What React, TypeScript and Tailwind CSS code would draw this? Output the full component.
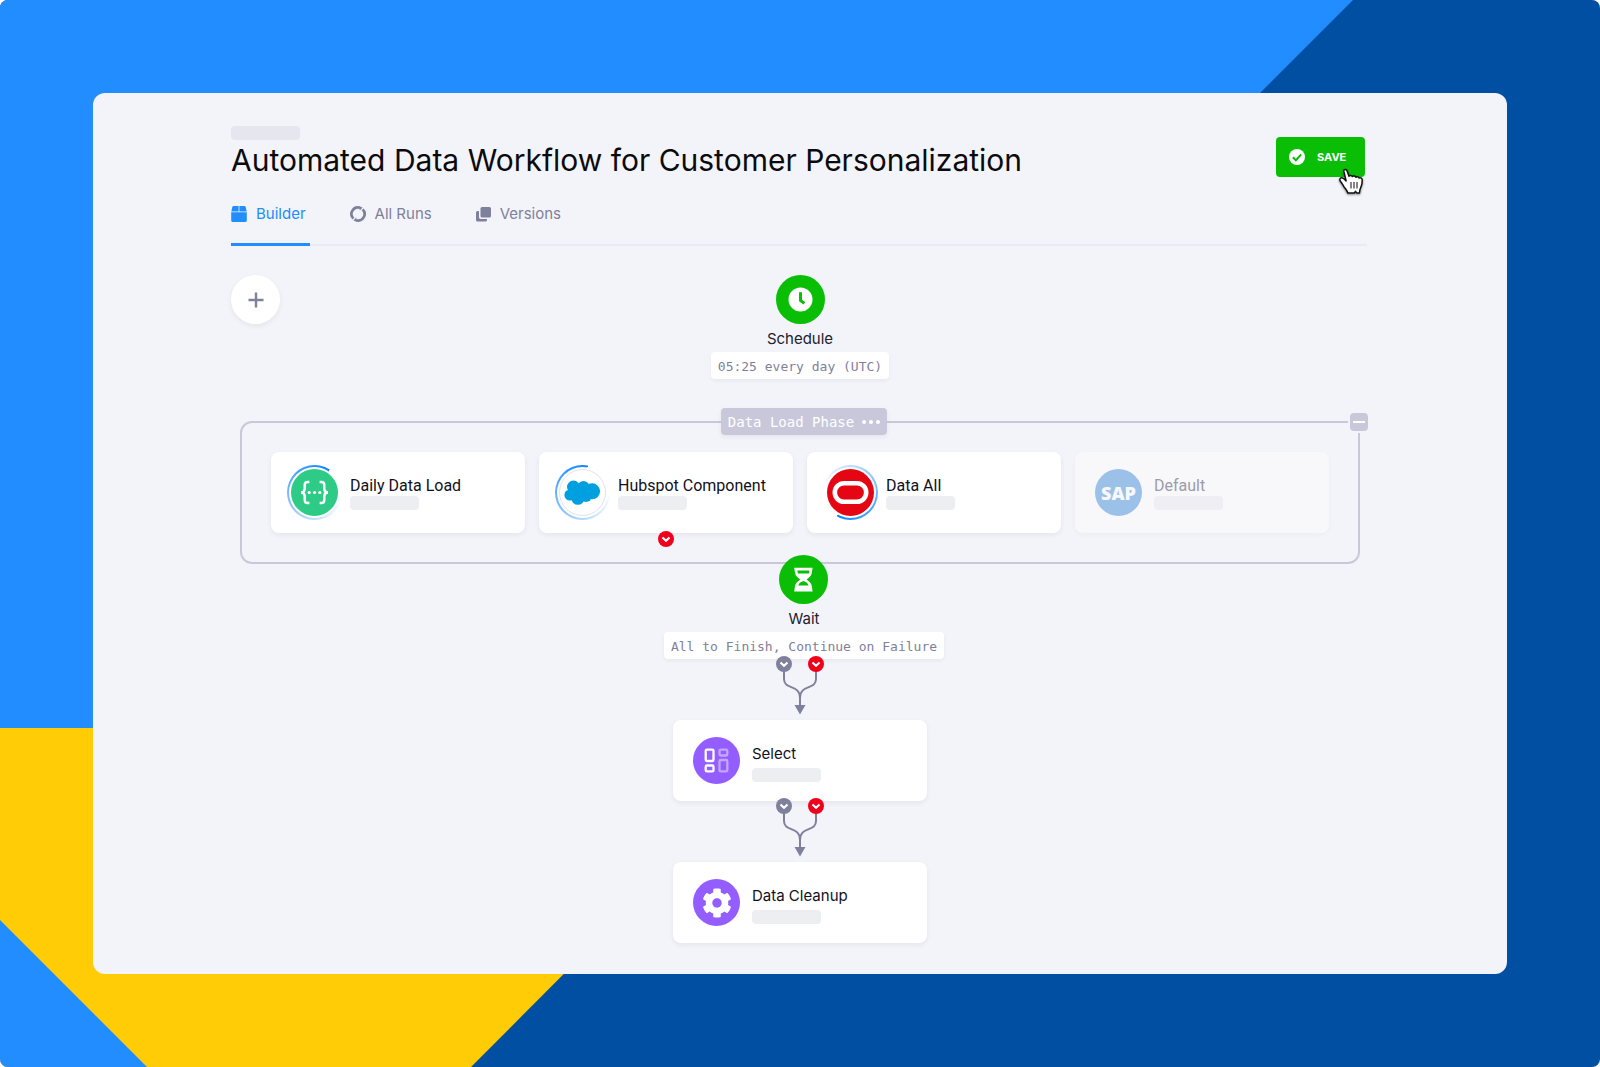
import type { ReactNode } from 'react';
import { FaCog } from 'react-icons/fa';

const tabs = [
  { label: 'Builder', icon: <BuilderIcon />, active: true },
  { label: 'All Runs', icon: <RunsIcon />, active: false },
  { label: 'Versions', icon: <VersionsIcon />, active: false },
];

function BuilderIcon() {
  return (
    <svg viewBox="0 0 16 16" className="size-4" fill="currentColor" aria-hidden="true">
      <path d="M2.700 0H7.600V5.400H.3L1.300 1.100A1.500 1.500 0 0 1 2.700 0z" />
      <path d="M8.400 0H13.300A1.500 1.500 0 0 1 14.700 1.100L15.700 5.400H8.400z" />
      <path d="M.2 6.200H15.800V14.500A1.500 1.500 0 0 1 14.300 16H1.700A1.500 1.500 0 0 1 .2 14.500z" />
    </svg>
  );
}

function RunsIcon() {
  return (
    <svg viewBox="0 0 16 16" className="size-4" fill="none" stroke="currentColor" strokeWidth="2.700" aria-hidden="true">
      <path d="M3.400 12.600A6.500 6.500 0 0 1 10 1.800" />
      <path d="M12.600 3.400A6.500 6.500 0 0 1 6 14.200" />
      <path d="M9 .2L12.600 1.500L9.800 4.600z" fill="currentColor" stroke="none" />
      <path d="M7 15.800L3.400 14.500L6.200 11.400z" fill="currentColor" stroke="none" />
    </svg>
  );
}

function VersionsIcon() {
  return (
    <svg viewBox="0 0 15 15" className="size-[15px]" fill="currentColor" aria-hidden="true">
      <rect x="4.500" y="0" width="10.500" height="10.500" rx="1.600" />
      <path d="M1.600 4H3V10.200A1.800 1.800 0 0 0 4.800 12H11V13A1.600 1.600 0 0 1 9.400 14.600H1.600A1.600 1.600 0 0 1 0 13V5.600A1.600 1.600 0 0 1 1.600 4z" />
    </svg>
  );
}

function Backdrop() {
  return (
    <svg
      viewBox="0 0 1600 1067"
      preserveAspectRatio="none"
      className="absolute inset-0 size-full"
      aria-hidden="true"
    >
      <rect width="1600" height="1067" fill="#004fa3" />
      <path d="M0 0H1353L625 728H0z" fill="#218dff" />
      <path d="M0 728H809L471 1067H0z" fill="#ffcc05" />
      <path d="M0 920L147 1067H0z" fill="#218dff" />
    </svg>
  );
}

function PointerHand() {
  return (
    <svg
      viewBox="0 0 27 30"
      className="pointer-events-none absolute left-[62px] top-[31px] h-[30px] w-[27px] drop-shadow-[0_1px_1px_rgba(0,0,0,0.45)]"
      aria-hidden="true"
    >
      <path
        d="M5.800 3.200C5.400 1.200 8.400 .7 9 2.700L11 8.300C11.500 7 13.900 7.200 14.300 8.600C15 7.500 17.400 7.800 17.900 9.300C18.700 8.400 20.700 8.800 21.100 10C21.900 9.300 24.100 9.800 24.200 11.800C24.300 15 24 16.700 23 18.900C22.200 20.700 21.500 22 21.500 25H18.800L17.500 23.400L16.300 25H9.800C9.300 22.500 7.200 20.700 5.700 18.300C4.700 16.700 4 15.200 2.600 13.500C1.200 11.800 1.800 9.500 3.900 9.700C5.500 9.900 6.600 11.200 8.100 13z"
        fill="#fff"
        stroke="#111"
        strokeWidth="1.500"
        strokeLinejoin="round"
      />
      <path d="M13 14V20.600M16 14V20.600M19 14V20.600" stroke="#222" strokeWidth="1.100" />
    </svg>
  );
}

function ClockIcon() {
  return (
    <svg viewBox="0 0 49 49" className="size-full" fill="none" aria-hidden="true">
      <circle cx="24.500" cy="24.500" r="12" fill="#fff" />
      <path d="M24.500 17.200V25.400L28.400 28.400" stroke="#0abe06" strokeWidth="3" />
    </svg>
  );
}

function HourglassIcon() {
  return (
    <svg viewBox="0 0 49 49" className="size-full" fill="none" aria-hidden="true">
      <path
        d="M15.200 12.800H33.600L32.700 18.600C32.300 21.300 29.300 23 27.600 24.600C29.300 26.200 32.300 27.900 32.700 30.600L33.600 36.500H15.200L16.100 30.600C16.500 27.900 19.500 26.200 21.200 24.600C19.500 23 16.500 21.300 16.100 18.600z"
        fill="#fff"
      />
      <path d="M18.300 15.600H30.500L29.800 18.500H19z" fill="#0abe06" />
      <path d="M19.300 30.500C19.800 27.700 22.200 26.800 24.400 25.900C26.600 26.800 29 27.700 29.500 30.500z" fill="#0abe06" />
    </svg>
  );
}

function ApiLogo() {
  return (
    <svg viewBox="0 0 47 47" className="relative size-full" fill="none" aria-hidden="true">
      <circle cx="23.500" cy="23.500" r="23.500" fill="#2dcb85" />
      <g stroke="#fff" strokeWidth="2.400">
        <path d="M18.400 13H16.600C14.600 13 13.700 14.200 13.700 16V19.800C13.700 22.200 12.600 23.400 10 23.500C12.600 23.600 13.700 24.800 13.700 27.200V31C13.700 32.800 14.600 34 16.600 34H18.400" />
        <path d="M28.600 13H30.400C32.400 13 33.300 14.200 33.300 16V19.800C33.300 22.200 34.400 23.400 37 23.500C34.400 23.600 33.300 24.800 33.300 27.200V31C33.300 32.800 32.400 34 30.400 34H28.600" />
      </g>
      <g fill="#fff">
        <circle cx="18.200" cy="23.500" r="1.600" />
        <circle cx="23.500" cy="23.500" r="1.600" />
        <circle cx="28.800" cy="23.500" r="1.600" />
      </g>
    </svg>
  );
}

function CloudLogo() {
  return (
    <svg viewBox="0 0 47 47" className="relative size-full" aria-hidden="true">
      <circle cx="23.500" cy="23.500" r="23" fill="#fff" stroke="#e1e2ec" />
      <g fill="#009fe0">
        <circle cx="14.500" cy="18" r="6.500" />
        <circle cx="24.500" cy="17.600" r="5.700" />
        <circle cx="33.100" cy="22.300" r="8" />
        <circle cx="10.900" cy="26" r="5.500" />
        <circle cx="18.900" cy="29.300" r="6.500" />
        <circle cx="27" cy="27" r="5.900" />
        <path d="M12 19h20v9H12z" />
      </g>
    </svg>
  );
}

function OracleLogo() {
  return (
    <svg viewBox="0 0 47 47" className="relative size-full" fill="none" aria-hidden="true">
      <circle cx="23.500" cy="23.500" r="23.500" fill="#e40613" />
      <rect x="7.800" y="14.300" width="31.400" height="18.400" rx="9.200" stroke="#fff" strokeWidth="4.600" />
    </svg>
  );
}

function SapLogo() {
  return (
    <span className="flex size-full items-center justify-center rounded-full bg-[#9cc1e8] font-['Open_Sans',sans-serif] text-lg font-extrabold text-[#f8f8fb]">
      SAP
    </span>
  );
}

function SelectLogo() {
  return (
    <svg viewBox="0 0 47 47" className="size-full" fill="none" stroke="#fff" strokeWidth="2.300" aria-hidden="true">
      <circle cx="23.500" cy="23.500" r="23.500" fill="#935dff" stroke="none" />
      <rect x="12.700" y="12.600" width="7.800" height="11.400" rx="1.200" />
      <rect x="12.700" y="28.500" width="7.800" height="5.900" rx="1.200" />
      <g opacity="0.450">
        <rect x="26.500" y="12.600" width="7.800" height="5.900" rx="1.200" />
        <rect x="26.500" y="23" width="7.800" height="11.400" rx="1.200" />
      </g>
    </svg>
  );
}

function CleanupLogo() {
  return (
    <span className="flex size-full items-center justify-center rounded-full bg-[#935dff] text-white">
      <FaCog className="size-[30px]" />
    </span>
  );
}

function Skeleton({ className }: { className: string }) {
  return <div className={`h-3.5 w-[69px] rounded ${className}`} />;
}

const phaseComponents = [
  {
    name: 'Daily Data Load',
    logo: <ApiLogo />,
    ring: 'bg-[conic-gradient(from_34deg,transparent_70deg,#0d84ff_360deg)]',
    failed: false,
    disabled: false,
  },
  {
    name: 'Hubspot Component',
    logo: <CloudLogo />,
    ring: 'bg-[conic-gradient(from_11deg,transparent_80deg,#0d84ff_360deg)]',
    failed: true,
    disabled: false,
  },
  {
    name: 'Data All',
    logo: <OracleLogo />,
    ring: 'bg-[conic-gradient(from_210deg,transparent_70deg,#0d84ff_360deg)]',
    failed: false,
    disabled: false,
  },
  { name: 'Default', logo: <SapLogo />, ring: '', failed: false, disabled: true },
];

function ComponentCard({
  name,
  logo,
  ring,
  failed,
  disabled,
}: {
  name: string;
  logo: ReactNode;
  ring: string;
  failed: boolean;
  disabled: boolean;
}) {
  return (
    <article
      className={`relative flex h-[81px] items-center gap-3 rounded-lg pl-5 ${
        disabled ? 'bg-[#f8f8fb] shadow-[0_2px_4px_rgba(60,70,110,0.03)]' : 'bg-white shadow-[0_2px_5px_rgba(60,70,110,0.08)]'
      }`}
    >
      <div className="relative size-[47px] shrink-0">
        {ring && (
          <div className={`absolute -inset-1 rounded-full p-0.5 ${ring}`}>
            <div className="size-full rounded-full bg-white" />
          </div>
        )}
        {logo}
      </div>
      <div className="font-[Roboto,sans-serif]">
        <h2 className={`text-base leading-[21px] ${disabled ? 'text-[#9c9ca8]' : 'text-[#111022]'}`}>{name}</h2>
        <Skeleton className={disabled ? 'bg-[#eeeef4]' : 'bg-[#edeef1]'} />
      </div>
      {failed && (
        <svg viewBox="0 0 16 16" className="absolute -bottom-3.5 left-1/2 size-4 -translate-x-1/2" fill="none">
          <circle cx="8" cy="8" r="8" fill="#f0001b" />
          <path d="M4.500 6.500L8 9.700L11.500 6.500" stroke="#fff" strokeWidth="2.200" />
        </svg>
      )}
    </article>
  );
}

function StepCard({ name, logo }: { name: string; logo: ReactNode }) {
  return (
    <article className="flex h-[81px] w-[254px] items-center gap-3 rounded-lg bg-white pl-5 shadow-[0_2px_5px_rgba(60,70,110,0.08)]">
      <div className="size-[47px] shrink-0">{logo}</div>
      <div className="flex flex-col gap-1 pt-[3px]">
        <h2 className="text-[15px] leading-[21px] text-[#111022]">{name}</h2>
        <Skeleton className="bg-[#edeef1]" />
      </div>
    </article>
  );
}

function Trigger({ icon, label, detail }: { icon: ReactNode; label: string; detail: string }) {
  return (
    <div className="relative flex flex-col items-center">
      <div className="size-[49px] rounded-full bg-[#0abe06]">{icon}</div>
      <h2 className="pt-0.5 text-[15px] leading-[26px] text-[#22212f]">{label}</h2>
      <p className="rounded bg-white px-[7px] pt-0.5 font-['DejaVu_Sans_Mono',monospace] text-[13px] leading-[25px] text-[#7f809b] shadow-[0_2px_4px_rgba(60,70,110,0.06)]">
        {detail}
      </p>
    </div>
  );
}

function Connector() {
  return (
    <svg viewBox="0 0 48 64" className="relative -mt-[3px] h-16 w-12" fill="none" aria-hidden="true">
      <path
        d="M8 12V23C8 34 24 28 24 42M40 12V23C40 34 24 28 24 42V52"
        stroke="#7f809b"
        strokeWidth="2"
      />
      <path d="M18.500 49H29.500L24 58.500z" fill="#7f809b" />
      <circle cx="8" cy="8" r="8" fill="#7f809b" />
      <circle cx="40" cy="8" r="8" fill="#f0001b" />
      <path d="M4.500 6.500L8 9.700L11.500 6.500M36.500 6.500L40 9.700L43.500 6.500" stroke="#fff" strokeWidth="2.200" />
    </svg>
  );
}

export default function App() {
  return (
    <div className="relative min-h-screen overflow-hidden rounded-lg p-[93px] font-[Inter,sans-serif]">
      <Backdrop />
      <main className="relative rounded-xl bg-[#f3f4f9] pb-[31px] pt-[33px]">
        <header className="pl-[138px] pr-[140px]">
          <div className="flex items-end justify-between pr-0.5">
            <div>
              <Skeleton className="bg-[#e5e6ee]" />
              <h1 className="text-[30px] leading-10 text-[#0b0b0d]">
                Automated Data Workflow for Customer Personalization
              </h1>
            </div>
            <div className="relative mb-[3px]">
              <button
                type="button"
                className="flex h-10 w-[89px] items-center gap-3 rounded bg-[#0abe06] pl-[13px] text-[11px] font-bold text-white"
              >
                <svg viewBox="0 0 16 16" className="size-4" fill="none" aria-hidden="true">
                  <circle cx="8" cy="8" r="8" fill="#fff" />
                  <path d="M3.800 8.200L6.900 11.200L12.200 5.400" stroke="#0abe06" strokeWidth="2" />
                </svg>
                SAVE
              </button>
              <PointerHand />
            </div>
          </div>
          <nav className="mt-[13px] flex gap-10 border-b-2 border-[#e9eaf4]">
            {tabs.map((tab) => (
              <button
                key={tab.label}
                type="button"
                className={`-mb-0.5 flex h-[53px] items-center gap-[9px] border-b-[3px] pb-2 pr-1 text-[15px] ${
                  tab.active ? 'border-[#218dff] text-[#218dff]' : 'border-transparent text-[#7f809b]'
                }`}
              >
                {tab.icon}
                {tab.label}
              </button>
            ))}
          </nav>
        </header>

        <section className="mt-[29px] grid grid-cols-[1fr_auto_1fr] items-start px-[138px]">
          <button
            type="button"
            aria-label="Add component"
            className="flex size-[49px] items-center justify-center rounded-full bg-white shadow-[0_2px_5px_rgba(60,70,110,0.08)]"
          >
            <svg viewBox="0 0 16 16" className="size-4" stroke="#7f809b" strokeWidth="2.400">
              <path d="M8 .5V15.500M.5 8H15.500" />
            </svg>
          </button>
          <Trigger icon={<ClockIcon />} label="Schedule" detail="05:25 every day (UTC)" />
        </section>

        <section className="relative mx-[147px] mt-[42px] rounded-xl border-2 border-[#c8c8da] p-[29px]">
          <div className="grid grid-cols-4 gap-3.5">
            {phaseComponents.map((component) => (
              <ComponentCard key={component.name} {...component} />
            ))}
          </div>
          <div className="absolute inset-x-0 -top-[15px] flex justify-center pl-2">
            <button
              type="button"
              className="flex h-[27px] items-center gap-2 rounded bg-[#c8c8da] px-[7px] font-['DejaVu_Sans_Mono',monospace] text-sm text-white shadow-[0_2px_4px_rgba(60,70,110,0.08)]"
            >
              Data Load Phase
              <svg viewBox="0 0 18 4" className="h-1 w-[18px]" fill="#fff" aria-hidden="true">
                <circle cx="2" cy="2" r="2" />
                <circle cx="9" cy="2" r="2" />
                <circle cx="16" cy="2" r="2" />
              </svg>
            </button>
          </div>
          <button
            type="button"
            aria-label="Collapse phase"
            className="absolute -right-3 -top-3 flex size-[22px] items-center justify-center rounded-md border-2 border-[#f3f4f9] bg-[#c8c8da]"
          >
            <span className="h-0.5 w-3 bg-white" />
          </button>
        </section>

        <div className="-mt-[9px] flex justify-center pl-2">
          <Trigger icon={<HourglassIcon />} label="Wait" detail="All to Finish, Continue on Failure" />
        </div>

        <div className="flex flex-col items-center">
          <Connector />
          <StepCard name="Select" logo={<SelectLogo />} />
          <Connector />
          <StepCard name="Data Cleanup" logo={<CleanupLogo />} />
        </div>
      </main>
    </div>
  );
}
